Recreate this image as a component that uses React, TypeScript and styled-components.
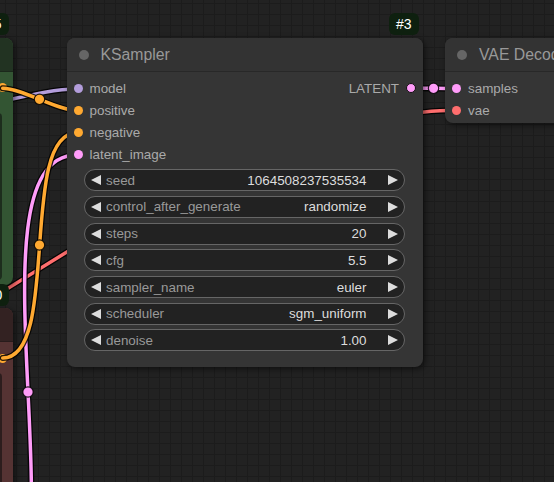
import React from 'react';
import styled, { createGlobalStyle } from 'styled-components';

const GlobalStyle = createGlobalStyle`
  html, body {
    margin: 0;
    padding: 0;
    background: #222;
  }
  body {
    font-family: "Liberation Sans", Arial, sans-serif;
  }
`;

const Canvas = styled.div`
  position: relative;
  width: 554px;
  height: 482px;
  overflow: hidden;
  background-color: #222;
  background-image: linear-gradient(to right, #1c1c1c 1px, transparent 1px),
    linear-gradient(to bottom, #1c1c1c 1px, transparent 1px);
  background-size: 11px 11px;
  background-position: 5px 3px;
`;

const LinkLayer = styled.svg<{ $z: number }>`
  position: absolute;
  left: 0;
  top: 0;
  width: 554px;
  height: 482px;
  z-index: ${(p) => p.$z};
  pointer-events: none;
`;

const Node = styled.div<{ $x: number; $y: number; $w: number; $h: number; $bg: string; $z?: number }>`
  position: absolute;
  left: ${(p) => p.$x}px;
  top: ${(p) => p.$y}px;
  width: ${(p) => p.$w}px;
  height: ${(p) => p.$h}px;
  background: ${(p) => p.$bg};
  border-radius: 8px;
  box-shadow: 2px 2px 6px rgba(0, 0, 0, 0.55);
  display: flex;
  flex-direction: column;
  z-index: ${(p) => p.$z ?? 3};
`;

const TitleBar = styled.div<{ $color: string }>`
  flex: none;
  height: 34px;
  box-sizing: border-box;
  display: flex;
  align-items: center;
  gap: 12px;
  padding-left: 12px;
  background: ${(p) => p.$color};
  border-radius: 8px 8px 0 0;
  border-bottom: 1px solid rgba(0, 0, 0, 0.2);
`;

const TitleDot = styled.span`
  flex: none;
  width: 10px;
  height: 10px;
  border-radius: 50%;
  background: #666;
`;

const TitleText = styled.span`
  font-size: 15.8px;
  color: #999;
  white-space: nowrap;
`;

const Slots = styled.div`
  display: flex;
  flex-direction: column;
  padding-top: 5px;
`;

const SlotRow = styled.div`
  height: 22px;
  display: flex;
  align-items: center;
  justify-content: space-between;
`;

const InSlot = styled.div`
  display: flex;
  align-items: center;
  gap: 7px;
  padding-left: 7px;
  font-size: 13.4px;
  color: #aaa;
  white-space: nowrap;
`;

const OutSlot = styled.div<{ $pad?: number }>`
  margin-left: auto;
  display: flex;
  align-items: center;
  gap: 7px;
  padding-right: ${(p) => p.$pad ?? 7}px;
  font-size: 13.4px;
  color: #aaa;
  white-space: nowrap;
`;

const Dot = styled.span<{ $color: string; $ring?: boolean }>`
  flex: none;
  box-sizing: border-box;
  width: ${(p) => (p.$ring ? 10 : 9)}px;
  height: ${(p) => (p.$ring ? 10 : 9)}px;
  border-radius: 50%;
  background: ${(p) => p.$color};
  border: ${(p) => (p.$ring ? '1.5px solid #111' : 'none')};
`;

const Widgets = styled.div`
  display: flex;
  flex-direction: column;
  gap: 4.7px;
  padding: 4px 18px 0 17px;
`;

const Widget = styled.div`
  height: 22px;
  box-sizing: border-box;
  border: 1px solid #666;
  border-radius: 11px;
  background: #222;
  display: flex;
  align-items: center;
  padding: 0 6px 0 6.5px;
  font-size: 13.4px;
`;

const ArrowLeft = styled.span`
  flex: none;
  width: 0;
  height: 0;
  border-top: 5.5px solid transparent;
  border-bottom: 5.5px solid transparent;
  border-right: 10.5px solid #ddd;
`;

const ArrowRight = styled.span`
  flex: none;
  width: 0;
  height: 0;
  border-top: 5.5px solid transparent;
  border-bottom: 5.5px solid transparent;
  border-left: 10.5px solid #ddd;
`;

const WidgetLabel = styled.span`
  flex: 1;
  margin-left: 5px;
  color: #999;
  white-space: nowrap;
`;

const WidgetValue = styled.span`
  margin-right: 21px;
  color: #ddd;
  white-space: nowrap;
`;

const TextBox = styled.div<{ $top: number; $bg: string }>`
  flex: 1;
  margin: ${(p) => p.$top}px 11px 5px 10px;
  border-radius: 4px;
  background: ${(p) => p.$bg};
`;

const Badge = styled.div<{ $x: number; $y: number }>`
  position: absolute;
  left: ${(p) => p.$x}px;
  top: ${(p) => p.$y}px;
  height: 22px;
  padding: 0 7px;
  border-radius: 6px;
  background: #0e200f;
  color: #fff;
  font-size: 14px;
  line-height: 22px;
  white-space: nowrap;
  z-index: 4;
`;

const OUTLINE = 'rgba(0,0,0,0.85)';

const Link = ({ d, color }: { d: string; color: string }) => (
  <g fill="none" strokeLinecap="round">
    <path d={d} stroke={OUTLINE} strokeWidth={6} />
    <path d={d} stroke={color} strokeWidth={3.5} />
  </g>
);

const Knot = ({ x, y, color }: { x: number; y: number; color: string }) => (
  <circle cx={x} cy={y} r={5.2} fill={color} stroke={OUTLINE} strokeWidth={1.2} />
);

const C = {
  model: '#b39ddb',
  cond: '#ffa931',
  latent: '#ff9cf9',
  vae: '#ff6e6e',
};

const widgets = [
  { name: 'seed', value: '1064508237535534' },
  { name: 'control_after_generate', value: 'randomize' },
  { name: 'steps', value: '20' },
  { name: 'cfg', value: '5.5' },
  { name: 'sampler_name', value: 'euler' },
  { name: 'scheduler', value: 'sgm_uniform' },
  { name: 'denoise', value: '1.00' },
];

export default function App() {
  return (
    <Canvas>
      <GlobalStyle />

      {/* links drawn behind every node */}
      <LinkLayer $z={0} viewBox="0 0 554 482">
        <Link d="M -40 110 C 10 101, 45 89, 77 89" color={C.model} />
        <Link d="M -40 318 L 130 213 L 380 118 C 410 113, 432 110.3, 456 110.3" color={C.vae} />
        <Link d="M -21 629 C 100 629, -44 155, 77 155" color={C.latent} />
        <Knot x={28} y={392} color={C.latent} />
        <Link d="M 411 88 C 425 88, 442 88.5, 456 88.5" color={C.latent} />
        <Knot x={433.5} y={88.3} color={C.latent} />
      </LinkLayer>

      <Badge $x={-21} $y={13.3}>#5</Badge>
      <Node $x={-200} $y={37.7} $w={213.3} $h={247.5} $bg="#335533" $z={1}>
        <TitleBar $color="#223322" />
        <Slots>
          <SlotRow>
            <OutSlot $pad={6}>
              <Dot $color={C.cond} />
            </OutSlot>
          </SlotRow>
        </Slots>
        <TextBox $top={14} $bg="#1d2d1d" />
      </Node>

      <Badge $x={-28} $y={284}>#10</Badge>
      <Node $x={-200} $y={308.3} $w={213.3} $h={220} $bg="#553333" $z={1}>
        <TitleBar $color="#332222" />
        <Slots>
          <SlotRow>
            <OutSlot $pad={6}>
              <Dot $color={C.cond} />
            </OutSlot>
          </SlotRow>
        </Slots>
        <TextBox $top={4} $bg="#2c1d1d" />
      </Node>

      {/* conditioning links pass over their own source nodes */}
      <LinkLayer $z={2} viewBox="0 0 554 482">
        <Link d="M 2.7 88.3 C 22 88.3, 57.5 110.7, 77 110.7" color={C.cond} />
        <Knot x={39.5} y={99.3} color={C.cond} />
        <Link d="M 2.7 358 C 61 358, 18 132.7, 77 132.7" color={C.cond} />
        <Knot x={39.5} y={245} color={C.cond} />
      </LinkLayer>

      <Badge $x={389} $y={13.3}>#3</Badge>
      <Node $x={66.5} $y={38.3} $w={356} $h={328.4} $bg="#353535">
        <TitleBar $color="#333333">
          <TitleDot />
          <TitleText>KSampler</TitleText>
        </TitleBar>
        <Slots>
          <SlotRow>
            <InSlot>
              <Dot $color={C.model} />
              model
            </InSlot>
            <OutSlot $pad={6.5}>
              LATENT
              <Dot $color={C.latent} $ring />
            </OutSlot>
          </SlotRow>
          <SlotRow>
            <InSlot>
              <Dot $color={C.cond} />
              positive
            </InSlot>
          </SlotRow>
          <SlotRow>
            <InSlot>
              <Dot $color={C.cond} />
              negative
            </InSlot>
          </SlotRow>
          <SlotRow>
            <InSlot>
              <Dot $color={C.latent} />
              latent_image
            </InSlot>
          </SlotRow>
        </Slots>
        <Widgets>
          {widgets.map((w) => (
            <Widget key={w.name}>
              <ArrowLeft />
              <WidgetLabel>{w.name}</WidgetLabel>
              <WidgetValue>{w.value}</WidgetValue>
              <ArrowRight />
            </Widget>
          ))}
        </Widgets>
      </Node>

      <Node $x={445} $y={38.3} $w={170} $h={85} $bg="#353535">
        <TitleBar $color="#333333">
          <TitleDot />
          <TitleText>VAE Decode</TitleText>
        </TitleBar>
        <Slots>
          <SlotRow>
            <InSlot>
              <Dot $color={C.latent} />
              samples
            </InSlot>
          </SlotRow>
          <SlotRow>
            <InSlot>
              <Dot $color={C.vae} />
              vae
            </InSlot>
          </SlotRow>
        </Slots>
      </Node>
    </Canvas>
  );
}
